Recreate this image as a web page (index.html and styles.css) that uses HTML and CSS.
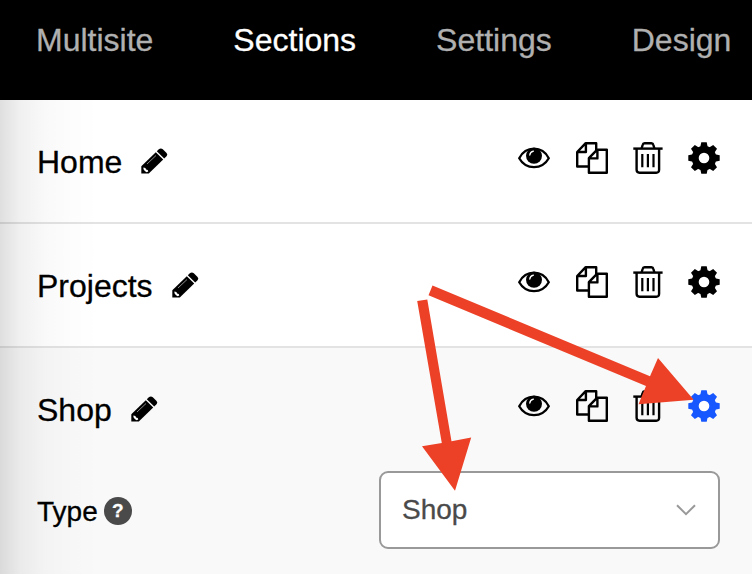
FILE: index.html
```html
<!DOCTYPE html>
<html lang="en">
<head>
  <meta charset="UTF-8" />
  <meta name="viewport" content="width=device-width, initial-scale=1.0"/>
  <title>Sections</title>
  <link rel="stylesheet" href="styles.css">
</head>
<body>
  <!-- shared icons -->
  <svg class="sprite" width="0" height="0">
    <symbol id="pencil" viewBox="0 0 27 26">
      <path d="M.3 25.600V18.200L14.800 4.200L22.200 11.500L7.800 25.600z" fill="currentColor"/>
      <path d="M15.800 3.200l2-1.900q2-1.800 4 0l3.500 3.400q1.800 1.900 0 3.700l-2.100 2z" fill="currentColor"/>
      <path d="M6 16l9-8.500" stroke="#999" stroke-width=".9"/>
      <path d="M2.400 19.400l2 .6.700 1.500 1.600.500.600 1.600-1.700.600-1.800-1.300-1.300-1.700z" fill="#fff"/>
    </symbol>
    <symbol id="eye" viewBox="0 0 32 32">
      <path d="M1.200 16.200C4.500 10 9.800 6.700 16 6.700S27.500 10 30.800 16.200C27.500 22 22.200 25.100 16 25.100S4.500 22 1.200 16.200z" fill="none" stroke="currentColor" stroke-width="2.300" stroke-linejoin="round"/>
      <circle cx="16" cy="13.800" r="8" fill="currentColor"/>
      <path d="M11.800 13q.3-3.200 3.600-3.900" fill="none" stroke="#fff" stroke-width="1.300" stroke-linecap="round"/>
    </symbol>
    <symbol id="copy" viewBox="0 0 32 32">
      <g fill="none" stroke="currentColor" stroke-width="2.400" stroke-linejoin="round">
        <path d="M12.300 24.500H1.200V10L9.700 1.200H20.200V8M1.400 10H9.900V1.400"/>
        <path d="M21.200 7.700L30.800 7.600V30.700H12.900V16.200zM13.100 16.400H21.400V7.800"/>
      </g>
    </symbol>
    <symbol id="trash" viewBox="0 0 30 32">
      <g fill="none" stroke="currentColor" stroke-width="2.400">
        <path d="M.3 6.600H29.600"/>
        <path d="M8.600 6.500l1-3.500q.4-1.700 2-1.700h6.800q1.600 0 2 1.700l1 3.500"/>
        <path d="M3.600 6.700V27.800q0 2.900 2.900 2.900H23.200Q26.100 30.700 26.100 27.800V6.700"/>
        <path d="M9.300 12V25.200M14.900 12V25.200M20.500 12V25.200" stroke-width="2.200"/>
      </g>
    </symbol>
    <symbol id="gear" viewBox="0 0 32 32">
      <g fill="currentColor">
        <path d="M12.300 5L13.300.3H18.700L19.700 5V27L18.700 31.700H13.300L12.300 27z"/>
        <path d="M12.300 5L13.300.3H18.700L19.700 5V27L18.700 31.700H13.300L12.300 27z" transform="rotate(45 16 16)"/>
        <path d="M12.300 5L13.300.3H18.700L19.700 5V27L18.700 31.700H13.300L12.300 27z" transform="rotate(90 16 16)"/>
        <path d="M12.300 5L13.300.3H18.700L19.700 5V27L18.700 31.700H13.300L12.300 27z" transform="rotate(135 16 16)"/>
        <circle cx="16" cy="16" r="12.300"/>
      </g>
      <circle class="hub" cx="16" cy="16" r="5.300"/>
    </symbol>
  </svg>

  <header class="navbar">
    <a class="nav-link">Multisite</a>
    <a class="nav-link active">Sections</a>
    <a class="nav-link">Settings</a>
    <a class="nav-link">Design</a>
  </header>

  <main class="panel">
    <section class="section">
      <div class="row">
        <span class="name">Home</span>
        <svg class="pencil"><use href="#pencil"/></svg>
        <div class="actions">
          <svg class="icon"><use href="#eye"/></svg>
          <svg class="icon"><use href="#copy"/></svg>
          <svg class="icon trash"><use href="#trash"/></svg>
          <svg class="icon"><use href="#gear"/></svg>
        </div>
      </div>
    </section>

    <section class="section">
      <div class="row">
        <span class="name">Projects</span>
        <svg class="pencil"><use href="#pencil"/></svg>
        <div class="actions">
          <svg class="icon"><use href="#eye"/></svg>
          <svg class="icon"><use href="#copy"/></svg>
          <svg class="icon trash"><use href="#trash"/></svg>
          <svg class="icon"><use href="#gear"/></svg>
        </div>
      </div>
    </section>

    <section class="section open">
      <div class="row">
        <span class="name">Shop</span>
        <svg class="pencil"><use href="#pencil"/></svg>
        <div class="actions">
          <svg class="icon"><use href="#eye"/></svg>
          <svg class="icon"><use href="#copy"/></svg>
          <svg class="icon trash"><use href="#trash"/></svg>
          <svg class="icon selected"><use href="#gear"/></svg>
        </div>
      </div>
      <div class="field">
        <span class="label">Type</span>
        <span class="help">?</span>
        <div class="select">
          <span>Shop</span>
          <svg class="chevron" viewBox="0 0 20 12"><path d="M1 1.200l9 9 9-9"/></svg>
        </div>
      </div>
    </section>
  </main>

  <svg class="arrows" viewBox="0 0 752 574">
    <path d="M432.500 285.500L650 376.200L658 358L693.700 399.700L638.500 404.300L646 386L428.500 295.200z"/>
    <path d="M417.200 301L427.300 299.400L451.500 441.200L471.200 437.600L455 490.800L422 446.200L441.800 443z"/>
  </svg>
</body>
</html>
```
FILE: styles.css
```css
* {
  box-sizing: border-box;
}

body {
  margin: 0;
  height: 574px;
  overflow: hidden;
  position: relative;
  font-family: "Liberation Sans", Arial, sans-serif;
  font-size: 32px;
  color: #000;
  background: #fff;
  -webkit-text-stroke: 0.3px;
}

.sprite {
  display: block;
}

.navbar {
  display: flex;
  gap: 80px;
  height: 100px;
  padding: 22px 0 0 36px;
  background: #000;
  line-height: 36px;
}

.nav-link {
  color: #b0b0b0;
}

.nav-link.active {
  color: #fff;
}

.panel {
  position: relative;
}

/* shadow cast by the left edge */
.panel::before {
  content: "";
  position: absolute;
  top: 0;
  bottom: 0;
  left: 0;
  width: 100px;
  background: linear-gradient(to right, rgba(0,0,0,0.125), rgba(0,0,0,0.06) 20%, rgba(0,0,0,0.022) 45%, rgba(0,0,0,0.006) 75%, transparent);
  pointer-events: none;
}

.section {
  height: 124px;
  border-bottom: 2px solid #e3e3e3;
}

.section.open {
  height: 226px;
  border-bottom: none;
  background: #f9f9f9;
}

.row {
  display: flex;
  align-items: center;
  height: 122px;
  padding: 0 32px 0 37px;
}

.name {
  line-height: 36px;
  padding-top: 2px;
}

.pencil {
  width: 27px;
  height: 26px;
  margin-left: 19px;
}

.actions {
  display: flex;
  gap: 26px;
  margin-left: auto;
  padding-bottom: 6px;
}

.icon {
  width: 32px;
  height: 32px;
}

.icon.trash {
  width: 30px;
  margin-left: -1px;
  margin-right: -1px;
}

.hub {
  fill: #fff;
}

.selected {
  color: #1757ff;
}

.field {
  display: flex;
  align-items: center;
  padding: 1px 32px 0 37px;
  font-size: 28px;
}

.label {
  padding-top: 3px;
}

.help {
  width: 28px;
  height: 28px;
  margin-top: 2px;
  margin-left: 6px;
  border-radius: 50%;
  background: #4a4a4a;
  color: #fff;
  font-size: 19px;
  font-weight: bold;
  line-height: 28px;
  text-align: center;
}

.select {
  display: flex;
  align-items: center;
  justify-content: space-between;
  width: 341px;
  height: 78px;
  margin-left: auto;
  padding: 0 22px 0 21px;
  border: 2px solid #999;
  border-radius: 9px;
  background: #fff;
  color: #4a4a4a;
}

.chevron {
  width: 20px;
  height: 12px;
  fill: none;
  stroke: #999;
  stroke-width: 2;
}

/* pointers drawn over the panel */
.arrows {
  position: absolute;
  top: 0;
  left: 0;
  width: 752px;
  height: 574px;
  fill: #ec4127;
}
```
